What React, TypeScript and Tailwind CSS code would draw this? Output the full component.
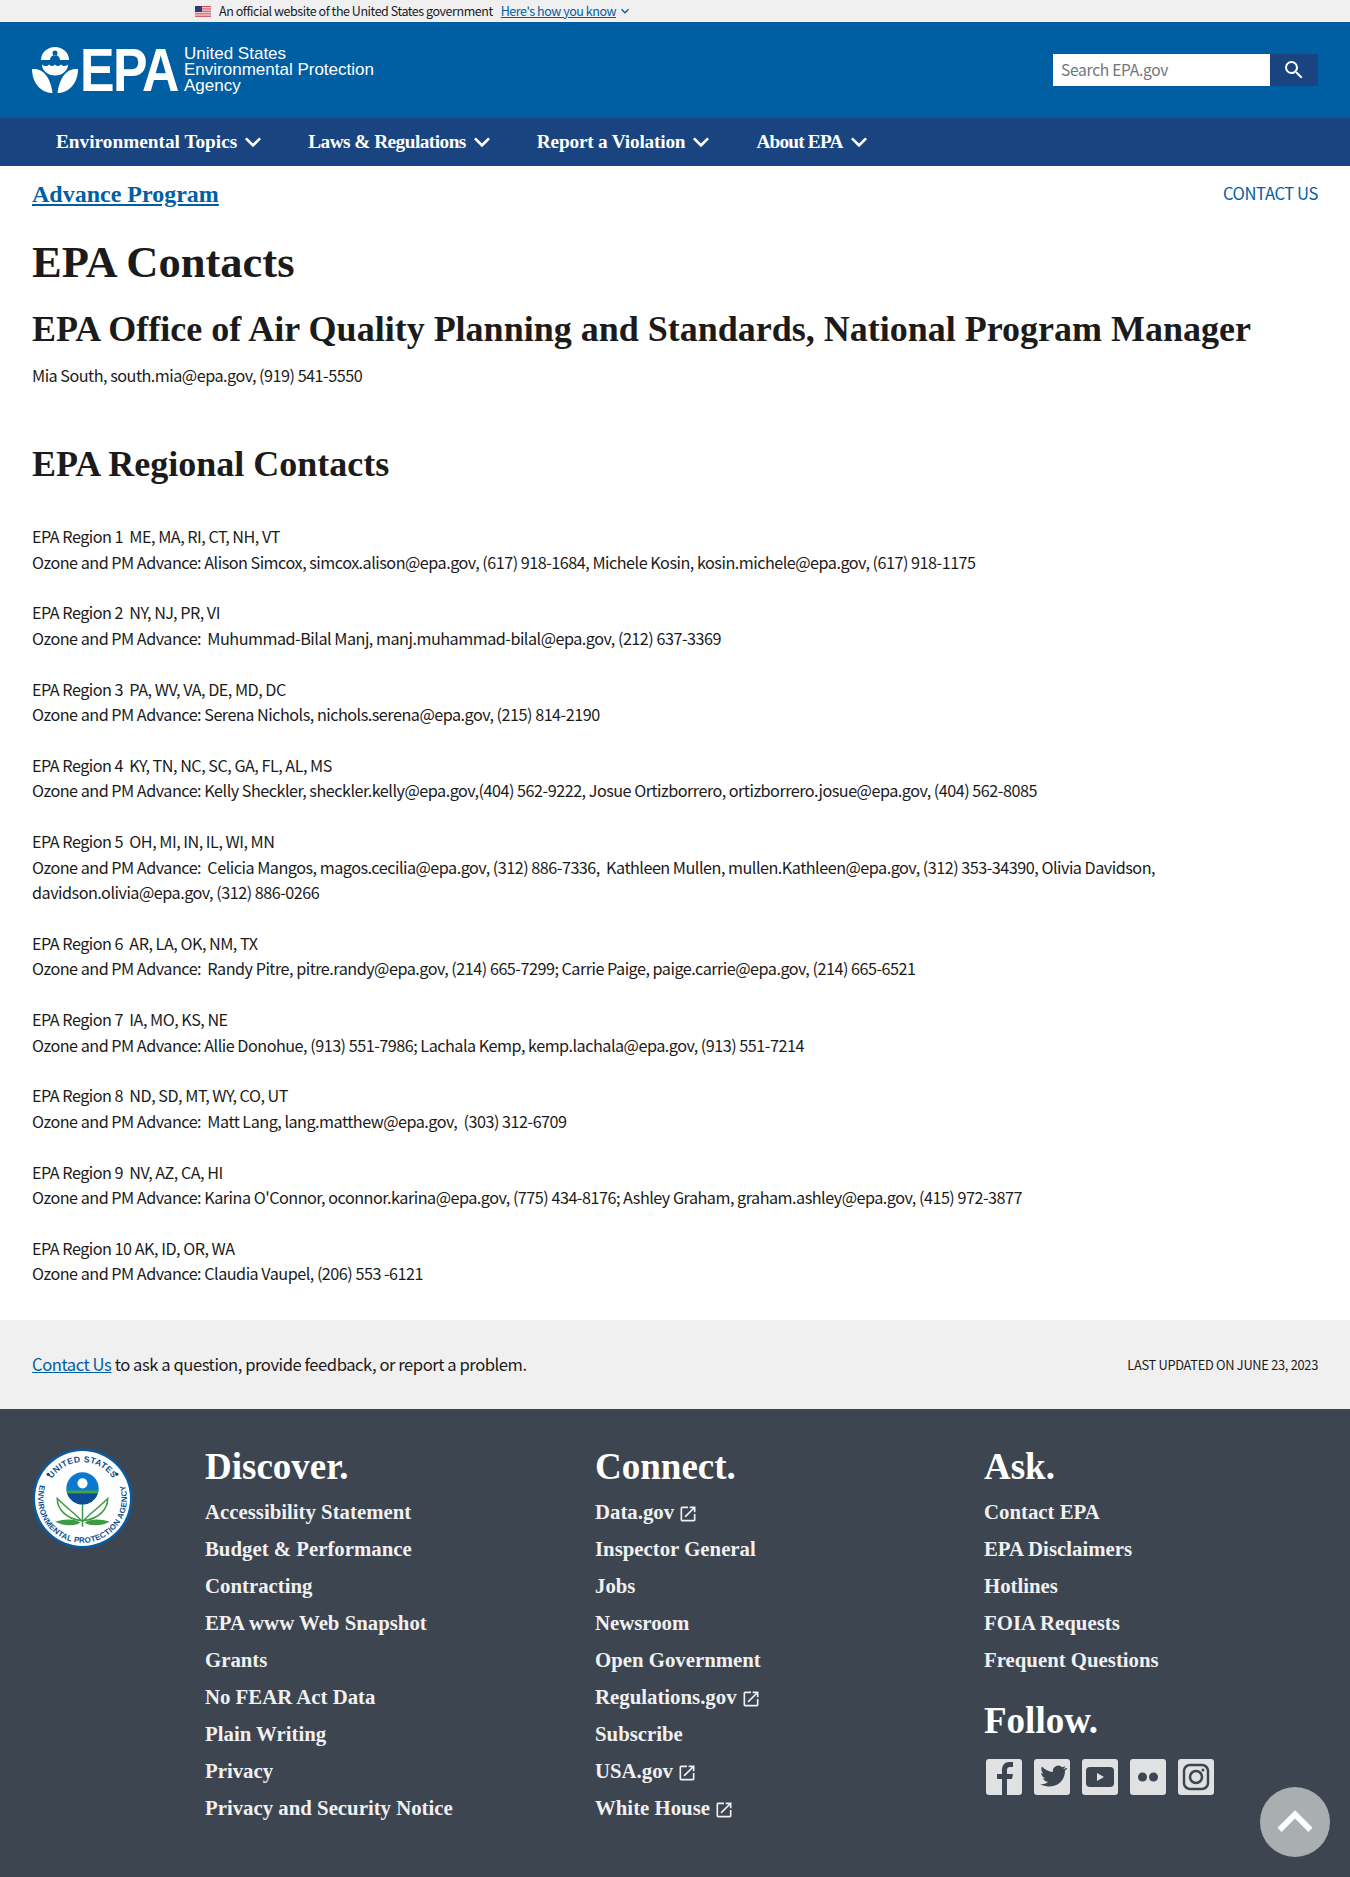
const sans = { fontFamily: '"Noto Sans CJK SC", "Noto Sans", sans-serif' };
const serif = { fontFamily: '"Liberation Serif", "DejaVu Serif", serif' };
const arial = { fontFamily: '"Liberation Sans", sans-serif' };

const navItems = [
  { label: "Environmental Topics", tracking: "tracking-[0px]" },
  { label: "Laws & Regulations", tracking: "tracking-[-.53px]" },
  { label: "Report a Violation", tracking: "tracking-[-.2px]" },
  { label: "About EPA", tracking: "tracking-[-.8px]" },
];

const regions = [
  ["EPA Region 1  ME, MA, RI, CT, NH, VT", "Ozone and PM Advance: Alison Simcox, simcox.alison@epa.gov, (617) 918-1684, Michele Kosin, kosin.michele@epa.gov, (617) 918-1175"],
  ["EPA Region 2  NY, NJ, PR, VI", "Ozone and PM Advance:  Muhummad-Bilal Manj, manj.muhammad-bilal@epa.gov, (212) 637-3369"],
  ["EPA Region 3  PA, WV, VA, DE, MD, DC", "Ozone and PM Advance: Serena Nichols, nichols.serena@epa.gov, (215) 814-2190"],
  ["EPA Region 4  KY, TN, NC, SC, GA, FL, AL, MS", "Ozone and PM Advance: Kelly Sheckler, sheckler.kelly@epa.gov,(404) 562-9222, Josue Ortizborrero, ortizborrero.josue@epa.gov, (404) 562-8085"],
  ["EPA Region 5  OH, MI, IN, IL, WI, MN", "Ozone and PM Advance:  Celicia Mangos, magos.cecilia@epa.gov, (312) 886-7336,  Kathleen Mullen, mullen.Kathleen@epa.gov, (312) 353-34390, Olivia Davidson, davidson.olivia@epa.gov, (312) 886-0266"],
  ["EPA Region 6  AR, LA, OK, NM, TX", "Ozone and PM Advance:  Randy Pitre, pitre.randy@epa.gov, (214) 665-7299; Carrie Paige, paige.carrie@epa.gov, (214) 665-6521"],
  ["EPA Region 7  IA, MO, KS, NE", "Ozone and PM Advance: Allie Donohue, (913) 551-7986; Lachala Kemp, kemp.lachala@epa.gov, (913) 551-7214"],
  ["EPA Region 8  ND, SD, MT, WY, CO, UT", "Ozone and PM Advance:  Matt Lang, lang.matthew@epa.gov,  (303) 312-6709"],
  ["EPA Region 9  NV, AZ, CA, HI", "Ozone and PM Advance: Karina O'Connor, oconnor.karina@epa.gov, (775) 434-8176; Ashley Graham, graham.ashley@epa.gov, (415) 972-3877"],
  ["EPA Region 10 AK, ID, OR, WA", "Ozone and PM Advance: Claudia Vaupel, (206) 553 -6121"],
];

const discover = ["Accessibility Statement", "Budget & Performance", "Contracting", "EPA www Web Snapshot", "Grants", "No FEAR Act Data", "Plain Writing", "Privacy", "Privacy and Security Notice"];
const connect: [string, boolean][] = [
  ["Data.gov", true], ["Inspector General", false], ["Jobs", false], ["Newsroom", false], ["Open Government", false],
  ["Regulations.gov", true], ["Subscribe", false], ["USA.gov", true], ["White House", true],
];
const ask = ["Contact EPA", "EPA Disclaimers", "Hotlines", "FOIA Requests", "Frequent Questions"];

function MaterialIcon({ d, className }: { d: string; className: string }) {
  return (
    <svg viewBox="0 0 24 24" className={className} fill="currentColor">
      <path d={d} />
    </svg>
  );
}

const expandMore = "M16.59 8.59 12 13.17 7.41 8.59 6 10l6 6 6-6z";
const expandLess = "M12 8l-6 6 1.41 1.41L12 10.83l4.59 4.58L18 14z";
const launch = "M19 19H5V5h7V3H5a2 2 0 0 0-2 2v14a2 2 0 0 0 2 2h14c1.1 0 2-.9 2-2v-7h-2v7zM14 3v2h3.59l-9.83 9.83 1.41 1.41L19 6.41V10h2V3h-7z";
const searchIcon = "M15.5 14h-.79l-.28-.27A6.471 6.471 0 0 0 16 9.5 6.5 6.5 0 1 0 9.5 16c1.61 0 3.09-.59 4.23-1.57l.27.28v.79l5 4.99L20.49 19l-4.99-5zm-6 0C7.01 14 5 11.99 5 9.500S7.01 5 9.5 5 14 7.01 14 9.500 11.990 14 9.500 14z";

function FlagIcon() {
  return (
    <svg viewBox="0 0 16 11" className="w-4 h-[11px]">
      <rect width="16" height="11" fill="#fff" />
      <path d="M0 .5h16M0 2.2h16M0 3.9h16M0 5.6h16M0 7.3h16M0 9h16M0 10.6h16" stroke="#c8313e" strokeWidth=".85" />
      <rect width="7" height="6" fill="#2f3a78" />
    </svg>
  );
}

function EpaMark({ className }: { className: string }) {
  return (
    <svg viewBox="0 0 46 46" className={className} fill="#fff">
      <path fillRule="evenodd" d="M9 13a14 13 0 0 1 28 0h-9a5 5 0 0 0-10 0zM23 3.500a2.500 2.500 0 1 0 0 5 2.500 2.500 0 0 0 0-5z" />
      <path d="M10 17.500c3 2 5 2 7 0 2 2 4 2 6 0 2 2 4 2 6 0 2 2 4 2 7 0a13 11 0 0 1-26 0z" />
      <path d="M0 22c9-1 18 5 20.500 24C9 46 0 36 0 22z" />
      <path d="M46 22c-9-1-18 5-20.500 24C37 46 46 36 46 22z" />
    </svg>
  );
}

function Seal() {
  return (
    <svg viewBox="0 0 100 100" className="w-[101px] h-[101px]">
      <circle cx="50" cy="50" r="49.500" fill="#0b5aa0" />
      <circle cx="50" cy="50" r="47" fill="#fff" />
      <defs>
        <path id="sealTop" d="M14 50a36 36 0 0 1 72 0" />
        <path id="sealBottom" d="M10.100 31.400A44 44 0 1 0 89.900 31.400" />
      </defs>
      <text fontSize="8.500" fontWeight="700" fill="#0b4f92" fontFamily="Liberation Sans, sans-serif" letterSpacing=".4">
        <textPath href="#sealTop" startOffset="50%" textAnchor="middle">UNITED STATES</textPath>
      </text>
      <text fontSize="7.800" fontWeight="700" fill="#0b4f92" fontFamily="Liberation Sans, sans-serif" letterSpacing=".3">
        <textPath href="#sealBottom" startOffset="50%" textAnchor="middle">ENVIRONMENTAL PROTECTION AGENCY</textPath>
      </text>
      <circle cx="16" cy="26" r="1.500" fill="#333" />
      <circle cx="84" cy="26" r="1.500" fill="#333" />
      <circle cx="50" cy="40" r="16" fill="#0a7ad0" />
      <path d="M34.200 42h31.600a16 16 0 0 1-.7 3H34.900a16 16 0 0 1-.7-3z" fill="#41a348" />
      <path d="M34.900 45h30.200A16 16 0 0 1 50 56a16 16 0 0 1-15.100-11z" fill="#0d4d97" />
      <circle cx="50" cy="35" r="5" fill="#fff" />
      <path d="M50 56v22" stroke="#3c9a43" strokeWidth="1.500" />
      <path d="M49 72C44 66 35 60 25 50c0 10 8 20 24 22z" fill="none" stroke="#3c9a43" strokeWidth="1.500" />
      <path d="M51 72c5-6 14-12 24-22 0 10-8 20-24 22z" fill="none" stroke="#3c9a43" strokeWidth="1.500" />
      <path d="M48 74c-6-4-15-4-25-1 8 4 17 5 25 1z" fill="#3c9a43" />
      <path d="M52 74c6-4 15-4 25-1-8 4-17 5-25 1z" fill="#3c9a43" />
    </svg>
  );
}

function SocialTile({ children }: { children: React.ReactNode }) {
  return (
    <div className="w-9 h-9 rounded-[3px] bg-[#dfe1e2] overflow-hidden flex items-center justify-center">
      <svg viewBox="0 0 36 36" className="w-9 h-9" fill="#3d4551">{children}</svg>
    </div>
  );
}

function FooterLink({ label, external }: { label: string; external?: boolean }) {
  return (
    <li className="h-[37px] flex items-center gap-[4px] text-[#f0f0f0] text-[20.800px] font-bold" style={serif}>
      {label}
      {external && <MaterialIcon d={launch} className="w-[20px] h-[20px] mt-1" />}
    </li>
  );
}

function FooterHeading({ children }: { children: string }) {
  return <h2 className="text-[37px] leading-[44px] font-bold text-white" style={serif}>{children}</h2>;
}

export default function App() {
  return (
    <div className="w-[1350px] h-[1877px] bg-white text-[#1b1b1b] flex flex-col" style={sans}>
      <div className="h-[22px] bg-[#f0f0f0] flex items-center pl-[195px] text-[12.500px] tracking-[-.45px]">
        <FlagIcon />
        <span className="ml-[8px]">An official website of the United States government</span>
        <a className="ml-2 text-[#005ea2] underline">Here's how you know</a>
        <MaterialIcon d={expandMore} className="w-4 h-4 ml-[1px] text-[#005ea2]" />
      </div>

      <header className="h-[96px] bg-[#005ea2] flex items-center justify-between pl-8 pr-8">
        <div className="flex items-center text-white">
          <EpaMark className="w-[46px] h-[46px]" />
          <div className="ml-[2px] w-[100px] overflow-visible">
            <span className="block origin-left scale-x-[.85] text-[61px] leading-none font-bold tracking-[-2px] whitespace-nowrap" style={arial}>EPA</span>
          </div>
          <div className="ml-[4px] text-[17px] leading-[16px]" style={arial}>
            United States<br />Environmental Protection<br />Agency
          </div>
        </div>
        <div className="flex h-[32px]">
          <div className="w-[217px] bg-white flex items-center px-2 text-[15.600px] tracking-[-.3px] text-[#71767a]">Search EPA.gov</div>
          <button className="w-[48px] bg-[#1a4480] flex items-center justify-center text-white">
            <MaterialIcon d={searchIcon} className="w-6 h-6" />
          </button>
        </div>
      </header>

      <nav className="h-[48px] bg-[#1a4480] flex items-center pl-[56px] gap-[39px]">
        {navItems.map((item) => (
          <div key={item.label} className={`flex items-center text-white text-[19.300px] font-bold ${item.tracking}`} style={serif}>
            {item.label}
            <MaterialIcon d={expandMore} className="w-[32px] h-[32px]" />
          </div>
        ))}
      </nav>

      <main className="px-8 flex-1">
        <div className="flex items-start justify-between pt-[11px]">
          <a className="text-[24px] leading-[34px] font-bold text-[#005ea2] underline" style={serif}>Advance Program</a>
          <a className="mt-[1px] text-[16.600px] tracking-[-.4px] leading-[30px] text-[#005ea2]">CONTACT US</a>
        </div>
        <h1 className="mt-[24px] text-[44.500px] leading-[54px] font-bold" style={serif}>EPA Contacts</h1>
        <h2 className="mt-[18px] text-[36px] leading-[44px] font-bold" style={serif}>EPA Office of Air Quality Planning and Standards, National Program Manager</h2>
        <p className="mt-[11px] text-[16.200px] tracking-[-.5px] leading-[26px]">Mia South, south.mia@epa.gov, (919) 541-5550</p>
        <h2 className="mt-[54px] text-[36px] leading-[44px] font-bold" style={serif}>EPA Regional Contacts</h2>
        <div className="mt-[38px] flex flex-col gap-[25.250px] text-[16.200px] tracking-[-.5px] leading-[25.500px] max-w-[1200px]">
          {regions.map(([region, contact]) => (
            <p key={region} className="whitespace-pre-wrap">{region}<br />{contact}</p>
          ))}
        </div>
      </main>

      <div className="h-[89px] bg-[#f0f0f0] flex items-center justify-between px-8">
        <p className="text-[16.600px] tracking-[-.45px]"><a className="text-[#005ea2] underline">Contact Us</a> to ask a question, provide feedback, or report a problem.</p>
        <p className="text-[12.800px] tracking-[-.28px]">LAST UPDATED ON JUNE 23, 2023</p>
      </div>

      <footer className="relative h-[468px] bg-[#3d4551] pl-8 pt-[36px] flex">
        <div className="w-[173px] shrink-0 mt-[3px]"><Seal /></div>
        <div className="w-[390px] shrink-0">
          <FooterHeading>Discover.</FooterHeading>
          <ul className="mt-[4px]">{discover.map((l) => <FooterLink key={l} label={l} />)}</ul>
        </div>
        <div className="w-[389px] shrink-0">
          <FooterHeading>Connect.</FooterHeading>
          <ul className="mt-[4px]">{connect.map(([l, e]) => <FooterLink key={l} label={l} external={e} />)}</ul>
        </div>
        <div>
          <FooterHeading>Ask.</FooterHeading>
          <ul className="mt-[4px]">{ask.map((l) => <FooterLink key={l} label={l} />)}</ul>
          <div className="mt-[21px]"><FooterHeading>Follow.</FooterHeading></div>
          <div className="mt-[16px] ml-[2px] flex gap-[12px]">
            <SocialTile><path d="M16 36V20h-5v-5h5v-4c0-5 3-8 7-8h4v5h-3c-2 0-3 1-3 3v4h6l-1 5h-5v16z" /></SocialTile>
            <SocialTile><path d="M32 9c-1 .6-2 .9-3 1 1-.7 2-1.800 2.400-3-1 .6-2.200 1-3.300 1.300A5.300 5.300 0 0 0 19 13c-4.300-.2-8.200-2.300-11-5.500-1.300 2.300-.7 5.400 1.600 7-.9 0-1.700-.3-2.400-.7 0 2.600 1.800 4.800 4.300 5.300-.8.200-1.600.3-2.400.1.700 2.100 2.700 3.600 5 3.700A10.700 10.700 0 0 1 6 25c9 5.500 25 2 25-13.500 1-.7 1.800-1.500 2.400-2.500z" /></SocialTile>
            <SocialTile><rect x="4" y="8" width="28" height="20" rx="4" /><path d="M15 14l7 4-7 4z" fill="#dfe1e2" /></SocialTile>
            <SocialTile><circle cx="12.500" cy="18" r="4.500" /><circle cx="23.500" cy="18" r="4.500" /></SocialTile>
            <SocialTile>
              <rect x="6" y="6" width="24" height="24" rx="6" fill="none" stroke="#3d4551" strokeWidth="2.500" />
              <circle cx="18" cy="18" r="6" fill="none" stroke="#3d4551" strokeWidth="2.500" />
              <circle cx="25" cy="11" r="1.500" />
            </SocialTile>
          </div>
        </div>
        <div className="absolute right-[20px] top-[378px] w-[70px] h-[70px] rounded-full bg-[#a9aeb1] flex items-center justify-center text-white">
          <MaterialIcon d={expandLess} className="w-[72px] h-[72px]" />
        </div>
      </footer>
    </div>
  );
}
